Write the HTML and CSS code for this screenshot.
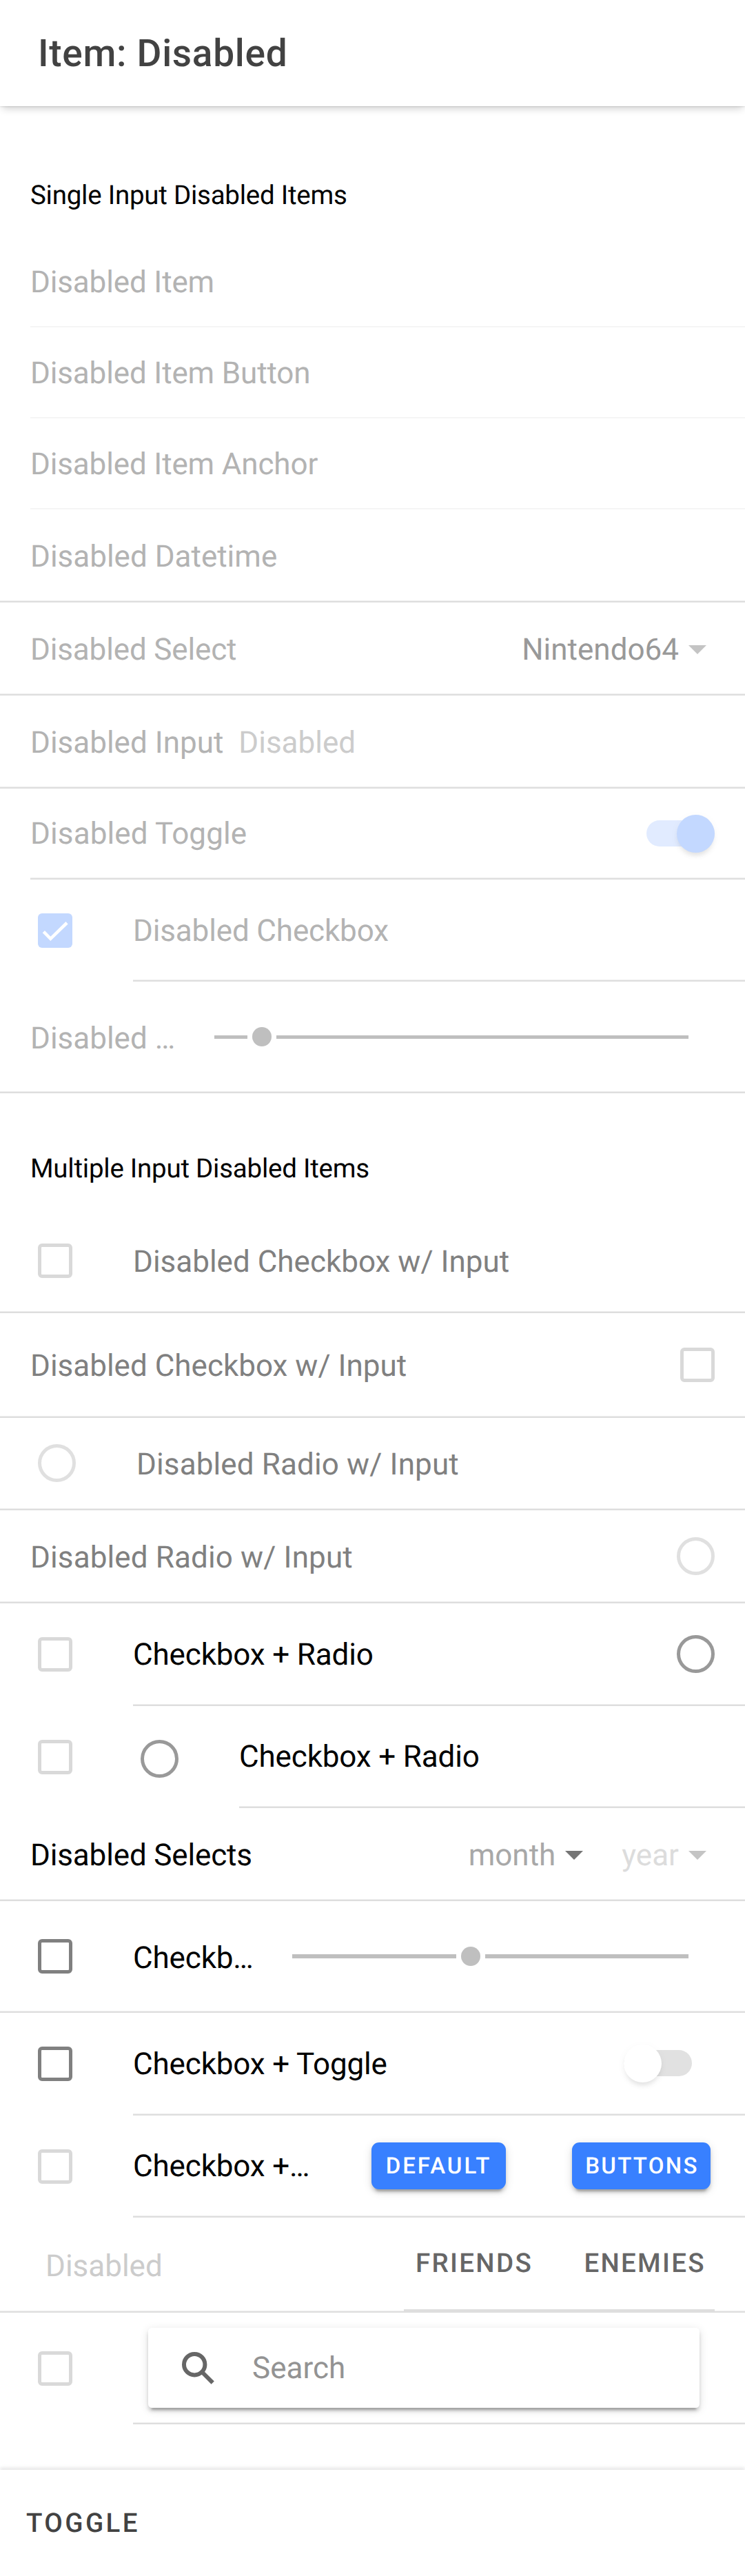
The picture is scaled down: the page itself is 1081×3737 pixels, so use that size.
FILE: index.html
```html
<!DOCTYPE html>
<html lang="en">
<head>
<meta charset="utf-8">
<title>Item: Disabled</title>
<link rel="stylesheet" href="styles.css">
</head>
<body>
<header class="toolbar"><h1 class="title">Item: Disabled</h1></header>
<main class="content">
  <section class="list">
    <h2 class="list-header first">Single Input Disabled Items</h2>
    <div class="item h48 faint"><div class="inner"><span class="label tight dim">Disabled Item</span></div></div>
    <div class="item h48 faint"><div class="inner"><span class="label tight dim">Disabled Item Button</span></div></div>
    <div class="item h48 faint"><div class="inner"><span class="label tight dim">Disabled Item Anchor</span></div></div>
    <div class="item h49 full"><div class="inner"><span class="label dim">Disabled Datetime</span></div></div>
    <div class="item h49 full"><div class="inner"><span class="label tight dim">Disabled Select</span><span class="select chosen">Nintendo64<i class="arrow"></i></span></div></div>
    <div class="item h49 full"><div class="inner"><span class="label snug dim">Disabled Input</span><span class="input">Disabled</span></div></div>
    <div class="item h48"><div class="inner"><span class="label loose dim">Disabled Toggle</span><span class="toggle on"><i class="knob"></i></span></div></div>
    <div class="item h54"><span class="check checked"><svg viewBox="0 0 24 24"><path d="M4 12.8 8.8 17.7 20.2 6.6"/></svg></span><div class="inner"><span class="label tight dim">Disabled Checkbox</span></div></div>
    <div class="item h59 full"><div class="inner"><span class="label dim">Disabled …</span><span class="range range-a"><i class="bar short"></i><i class="dot"></i><i class="bar"></i></span></div></div>
  </section>
  <section class="list">
    <h2 class="list-header second">Multiple Input Disabled Items</h2>
    <div class="item h55 full"><span class="check off"></span><div class="inner"><span class="label mid">Disabled Checkbox w/ Input</span></div></div>
    <div class="item h55 full"><div class="inner"><span class="label mid">Disabled Checkbox w/ Input</span><span class="check off end"></span></div></div>
    <div class="item h49 full"><span class="radio off"></span><div class="inner"><span class="label loose mid">Disabled Radio w/ Input</span></div></div>
    <div class="item h49 full"><div class="inner"><span class="label loose mid">Disabled Radio w/ Input</span><span class="radio off end"></span></div></div>
    <div class="item h54"><span class="check off"></span><div class="inner"><span class="label tight">Checkbox + Radio</span><span class="radio end"></span></div></div>
    <div class="item h54"><span class="check off"></span><span class="radio nested"></span><div class="inner"><span class="label tight">Checkbox + Radio</span></div></div>
    <div class="item h49 full"><div class="inner"><span class="label tight">Disabled Selects</span><span class="select placeholder">month<i class="arrow dark"></i></span><span class="select placeholder-off">year<i class="arrow"></i></span></div></div>
    <div class="item h59 full"><span class="check"></span><div class="inner"><span class="label tight">Checkb…</span><span class="range range-b"><i class="bar"></i><i class="dot"></i><i class="bar grow"></i></span></div></div>
    <div class="item h54"><span class="check"></span><div class="inner"><span class="label tight">Checkbox + Toggle</span><span class="toggle off"><i class="knob"></i></span></div></div>
    <div class="item h54"><span class="check off"></span><div class="inner"><span class="label tight">Checkbox +…</span><span class="button default">DEFAULT</span><span class="button buttons">BUTTONS</span></div></div>
    <div class="item h50 full"><div class="inner"><span class="input indent">Disabled</span><div class="segment"><span>FRIENDS</span><span>ENEMIES</span></div></div></div>
    <div class="item h59"><span class="check off"></span><div class="inner"><div class="searchbar"><svg class="search-icon" viewBox="0 0 47 47"><circle cx="18.2" cy="18.2" r="15.2"/><path d="M28.5 28.5 44.7 44.7"/></svg><span class="search-text">Search</span></div></div></div>
  </section>
</main>
<footer class="footer"><span class="footer-button">TOGGLE</span></footer>
</body>
</html>
```
FILE: styles.css
```css
*{box-sizing:border-box}
body{margin:0;width:1081px;height:3737px;display:flex;flex-direction:column;background:#fff;color:#000;font-family:Roboto,"Liberation Sans",sans-serif;font-size:44px;text-rendering:geometricPrecision}
.toolbar{height:154px;flex:none;display:flex;align-items:center;padding:2px 0 0 55px;box-shadow:0 5.5px 11px -2.75px rgba(0,0,0,.2),0 0 3px rgba(0,0,0,.2);position:relative}
.title{margin:0;font-size:55px;line-height:66px;font-weight:500;letter-spacing:.688px;color:#424242}
.content{flex:1}
.list-header{margin:0;padding-left:44px;font-size:38.5px;line-height:46px;font-weight:400;letter-spacing:-.25px}
.list-header.first{height:189.4px;padding-top:107px}
.list-header.second{height:167.7px;padding-top:87px}
.item{display:flex;padding-left:44px}
.h48{height:132px}
.h49{height:134.8px}
.h50{height:138px}
.h54{height:148.5px}
.h55{height:151.2px}
.h59{height:162.2px}
.inner{flex:1;min-width:0;display:flex;align-items:center;padding-right:44px;border-bottom:2px solid #dedede;box-shadow:inset 0 -1px 0 #eee}
.full{border-bottom:2px solid #dedede;box-shadow:inset 0 -1px 0 #eee}
.full .inner{border-bottom:0;box-shadow:none}
.faint .inner{border-bottom-color:#f5f5f5;box-shadow:none}
.label{flex:1;line-height:54px;padding-top:1px;white-space:nowrap}
.full .label,.full .input{padding-top:3px}
.snug{flex:none}
.tight{letter-spacing:-.15px}
.loose{letter-spacing:.12px}
.dim{color:#b3b3b3}
.mid{color:#808080}
.select{display:flex;align-items:center;line-height:54px;padding:3px 12px 0 0}
.chosen{color:#999}
.placeholder{color:#a8a8a8;padding-right:56px}
.placeholder-off{color:#dcdcdc}
.arrow{margin-left:14px;border:13.75px solid transparent;border-top-color:#c4c4c4;border-bottom:0}
.arrow.dark{border-top-color:#757575}
.input{color:#ccc;line-height:54px;flex:1;margin-left:22px}
.check{flex:none;align-self:center;width:50px;height:50px;margin:0 88px 0 11px;border:5.5px solid #808080;border-radius:6px}
.check.off{border-color:#d9d9d9}
.check.end,.radio.end{margin:0 0 0 22px}
.check.checked{background:#c3d8ff;border:0}
.checked svg{display:block;width:50px;height:50px;fill:none;stroke:#fff;stroke-width:2.2}
.radio{flex:none;align-self:center;width:55px;height:55px;border:5.5px solid #999;border-radius:50%;margin:0 88px 0 11px}
.radio.off{border-color:#e0e0e0}
.radio.nested{margin:5px 88px 0 11px}
.toggle{position:relative;width:99px;height:38px;border-radius:19px;background:#e1ebff}
.toggle.off{background:#e1e1e1;margin-right:33px}
.knob{position:absolute;right:0;top:-8px;width:55px;height:55px;border-radius:50%;background:#c3d8ff;box-shadow:0 8px 6px -5px rgba(0,0,0,.06),0 6px 6px rgba(0,0,0,.04),0 3px 14px rgba(0,0,0,.035)}
.off .knob{right:auto;left:0;background:#fff}
.range{display:flex;align-items:center;margin-right:38px}
.bar{height:5.5px;flex:1;background:#bfbfbf}
.short{flex:0 0 48px}
.dot{width:28px;height:28px;border-radius:50%;background:#bfbfbf;margin:0 7px}
.range-a{width:688px}
.range-b{width:575px}
.range-b .bar{flex:0 0 238px}
.range-b .grow{flex:1}
.button{flex:none;height:68px;display:flex;align-items:center;justify-content:center;border-radius:11px;background:#3880ff;color:#fff;font-size:33px;font-weight:500;padding-top:2px;box-shadow:0 8px 3px -5px rgba(0,0,0,.2),0 5px 5px rgba(0,0,0,.14),0 3px 14px rgba(0,0,0,.12)}
.default{width:195px;letter-spacing:3px}
.buttons{width:201px;margin:0 6px 0 96px;padding-left:2px;letter-spacing:2.3px}
.segment{align-self:flex-end;display:flex;height:134px;align-items:center;border-bottom:3px solid #dedede;font-size:38.5px;font-weight:500;letter-spacing:2.31px;color:#666;padding:0 13px 2px 17px;width:451px;justify-content:space-between}
.searchbar{display:flex;align-items:center;width:800px;height:116px;margin-left:22px;padding-left:49px;border-radius:5.5px;box-shadow:0 8px 3px -5px rgba(0,0,0,.2),0 5px 5px rgba(0,0,0,.14),0 3px 14px rgba(0,0,0,.12)}
.search-icon{width:47px;height:47px;fill:none;stroke:#666;stroke-width:6}
.search-text{margin-left:55px;color:#939393;line-height:54px}
.footer{height:154px;flex:none;display:flex;align-items:center;padding:1px 0 0 38px;box-shadow:0 -3px 5px rgba(0,0,0,.1)}
.footer-button{font-size:38.5px;font-weight:500;letter-spacing:3.4px;color:#424242}
```
